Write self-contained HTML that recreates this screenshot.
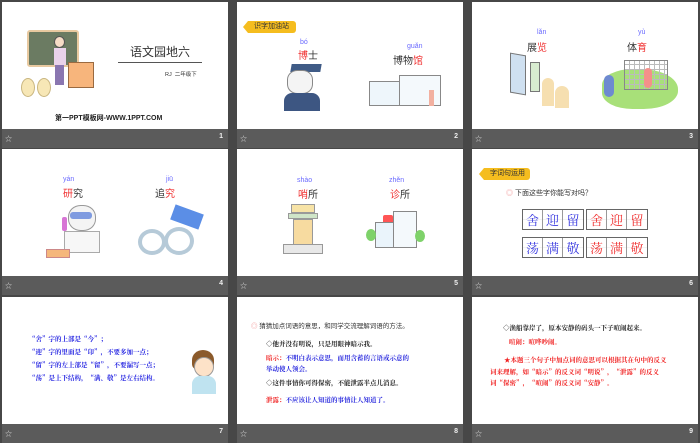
<!DOCTYPE html>
<html><head><meta charset="utf-8"><style>
*{margin:0;padding:0;box-sizing:border-box}
body{width:700px;height:438px;background:#474747;position:relative;overflow:hidden;font-family:"Liberation Sans","Noto Sans CJK SC",sans-serif}
.s{position:absolute;width:226px;height:127px;background:#fff;overflow:hidden}
.bar{position:absolute;width:226px;height:19px;background:#5b5b5b;color:#ddd;font-size:7px}
.bar .st{position:absolute;left:3px;top:5px}
.bar .n{position:absolute;right:5px;top:4px;font-weight:bold;color:#eee}
.a{position:absolute;white-space:nowrap}
.py{color:#6a6aff;font-size:7px}
.hz{font-size:10px;color:#333}
.r{color:#f03030}
.tag{position:absolute;background:#f5bd1f;color:#333;font-size:7px;height:12px;line-height:12px;padding-left:6px;border-radius:0 3px 3px 0}
.tag:before{content:"";position:absolute;left:-5px;top:0;border-right:5px solid #f5bd1f;border-top:6px solid transparent;border-bottom:6px solid transparent}
.grid{position:absolute;display:flex;border:1px solid #666;height:21px}
.grid span{width:20px;border-right:1px solid #999;text-align:center;font-size:13px;line-height:19px;font-family:"Noto Serif CJK SC",serif;background:linear-gradient(#fff 48%,#ddd 50%,#fff 52%)}
.grid span:last-child{border-right:none}
.b7{color:#1a1ae0;font-weight:bold;font-size:6.5px;font-family:"Noto Serif CJK SC",serif}
.t8{font-size:6.5px;font-weight:bold;font-family:"Noto Serif CJK SC",serif}
</style></head><body>

<!-- row 1 -->
<div class="s" style="left:2px;top:2px">
  <div class="a" style="left:25px;top:28px;width:52px;height:37px;background:#6b7b62;border:2px solid #e8c9a0;border-radius:3px"></div>
  <div class="a" style="left:52px;top:34px;width:11px;height:12px;background:#f6dcc6;border-radius:50%;border:1px solid #555"></div>
  <div class="a" style="left:52px;top:46px;width:12px;height:17px;background:#e9d2ea"></div>
  <div class="a" style="left:53px;top:63px;width:9px;height:20px;background:#8a76b0"></div>
  <div class="a" style="left:66px;top:60px;width:26px;height:26px;background:#f7b57c;border:1px solid #9a6a40"></div>
  <div class="a" style="left:19px;top:76px;width:14px;height:19px;background:#f7e7b6;border-radius:50%;border:1px solid #c9b680"></div>
  <div class="a" style="left:35px;top:76px;width:14px;height:19px;background:#f7e7b6;border-radius:50%;border:1px solid #c9b680"></div>
  <div class="a" style="left:128px;top:41px;font-size:12px;color:#333">语文园地六</div>
  <div class="a" style="left:116px;top:60px;width:84px;height:1px;background:#555"></div>
  <div class="a" style="left:163px;top:68px;font-size:5.5px;color:#333">RJ &nbsp;二年级下</div>
  <div class="a" style="left:53px;top:111px;font-size:7px;font-weight:bold;color:#222">第一PPT模板网-WWW.1PPT.COM</div>
</div>
<div class="bar" style="left:2px;top:129px"><span class="st">☆</span><span class="n">1</span></div>

<div class="s" style="left:237px;top:2px">
  <div class="tag" style="left:11px;top:19px;width:48px">识字加油站</div>
  <div class="a py" style="left:63px;top:37px">bó</div>
  <div class="a hz" style="left:61px;top:45px"><span class="r">博</span>士</div>
  <div class="a" style="left:54px;top:62px;width:30px;height:8px;background:#3f5b86;transform:skewX(-10deg)"></div>
  <div class="a" style="left:50px;top:68px;width:26px;height:24px;background:#f4f4f4;border:1px solid #888;border-radius:40%"></div>
  <div class="a" style="left:47px;top:91px;width:36px;height:18px;background:#3d5682;border-radius:8px 8px 0 0"></div>
  <div class="a py" style="left:170px;top:41px">guǎn</div>
  <div class="a hz" style="left:156px;top:50px">博物<span class="r">馆</span></div>
  <div class="a" style="left:132px;top:79px;width:44px;height:25px;border:1px solid #888;background:#eef6fb"></div>
  <div class="a" style="left:162px;top:73px;width:42px;height:31px;border:1px solid #888;background:#f4f9fc"></div>
  <div class="a" style="left:192px;top:88px;width:5px;height:16px;background:#f2b0a0"></div>
</div>
<div class="bar" style="left:237px;top:129px"><span class="st">☆</span><span class="n">2</span></div>

<div class="s" style="left:472px;top:2px">
  <div class="a py" style="left:65px;top:27px">lǎn</div>
  <div class="a hz" style="left:55px;top:37px">展<span class="r">览</span></div>
  <div class="a" style="left:38px;top:52px;width:16px;height:40px;border:1px solid #777;background:#cfe0f0;transform:skewY(10deg)"></div>
  <div class="a" style="left:58px;top:60px;width:10px;height:30px;border:1px solid #777;background:#d8ecd0"></div>
  <div class="a" style="left:70px;top:76px;width:12px;height:28px;background:#f6dfb0;border-radius:6px 6px 0 0"></div>
  <div class="a" style="left:83px;top:84px;width:14px;height:22px;background:#f6dfb0;border-radius:7px 7px 0 0"></div>
  <div class="a py" style="left:166px;top:27px">yù</div>
  <div class="a hz" style="left:155px;top:37px">体<span class="r">育</span></div>
  <div class="a" style="left:130px;top:67px;width:76px;height:40px;background:#a8e079;border-radius:40% 50% 45% 40%"></div>
  <div class="a" style="left:152px;top:58px;width:44px;height:30px;border:1px solid #888;background:repeating-linear-gradient(90deg,transparent 0 4px,#bbb 4px 5px),repeating-linear-gradient(0deg,transparent 0 4px,#bbb 4px 5px)"></div>
  <div class="a" style="left:132px;top:73px;width:10px;height:22px;background:#6e8ad0;border-radius:5px"></div>
  <div class="a" style="left:172px;top:66px;width:8px;height:20px;background:#f4908a;border-radius:4px"></div>
</div>
<div class="bar" style="left:472px;top:129px"><span class="st">☆</span><span class="n">3</span></div>

<!-- row 2 -->
<div class="s" style="left:2px;top:149px">
  <div class="a py" style="left:61px;top:27px">yán</div>
  <div class="a hz" style="left:61px;top:36px"><span class="r">研</span>究</div>
  <div class="a" style="left:66px;top:56px;width:28px;height:26px;background:#f4f4f4;border:1px solid #999;border-radius:45%"></div>
  <div class="a" style="left:68px;top:63px;width:22px;height:7px;background:#7f9be0;border-radius:3px"></div>
  <div class="a" style="left:62px;top:82px;width:36px;height:22px;background:#f7f7f7;border:1px solid #aaa"></div>
  <div class="a" style="left:44px;top:100px;width:24px;height:9px;background:#f5b77b;border:1px solid #c88"></div>
  <div class="a" style="left:60px;top:68px;width:5px;height:14px;background:#d775d5;border-radius:2px"></div>
  <div class="a py" style="left:164px;top:27px">jiū</div>
  <div class="a hz" style="left:153px;top:36px">追<span class="r">究</span></div>
  <div class="a" style="left:170px;top:60px;width:30px;height:16px;background:#5b8ee6;transform:rotate(20deg)"></div>
  <div class="a" style="left:136px;top:80px;width:28px;height:26px;border:4px solid #b6cad8;border-radius:50%"></div>
  <div class="a" style="left:162px;top:78px;width:30px;height:28px;border:4px solid #b6cad8;border-radius:50%"></div>
</div>
<div class="bar" style="left:2px;top:276px"><span class="st">☆</span><span class="n">4</span></div>

<div class="s" style="left:237px;top:149px">
  <div class="a py" style="left:60px;top:28px">shào</div>
  <div class="a hz" style="left:61px;top:37px"><span class="r">哨</span>所</div>
  <div class="a" style="left:54px;top:55px;width:24px;height:9px;background:#f7e3a6;border:1px solid #999"></div>
  <div class="a" style="left:51px;top:64px;width:30px;height:6px;background:#cfe5c8;border:1px solid #999"></div>
  <div class="a" style="left:56px;top:70px;width:20px;height:26px;background:#f7dba0;border:1px solid #999"></div>
  <div class="a" style="left:46px;top:95px;width:40px;height:10px;background:#e8e8e8;border:1px solid #999"></div>
  <div class="a py" style="left:152px;top:28px">zhěn</div>
  <div class="a hz" style="left:153px;top:37px"><span class="r">诊</span>所</div>
  <div class="a" style="left:146px;top:66px;width:10px;height:10px;background:#f55;border-radius:2px"></div>
  <div class="a" style="left:138px;top:73px;width:40px;height:26px;background:#eaf4fb;border:1px solid #888"></div>
  <div class="a" style="left:156px;top:62px;width:24px;height:37px;background:#f4f9fc;border:1px solid #888"></div>
  <div class="a" style="left:129px;top:80px;width:10px;height:12px;background:#7ed26a;border-radius:50%"></div>
  <div class="a" style="left:178px;top:81px;width:10px;height:12px;background:#7ed26a;border-radius:50%"></div>
</div>
<div class="bar" style="left:237px;top:276px"><span class="st">☆</span><span class="n">5</span></div>

<div class="s" style="left:472px;top:149px">
  <div class="tag" style="left:12px;top:19px;width:46px">字词句运用</div>
  <div class="a" style="left:34px;top:39px;font-size:7px;color:#333"><span style="color:#f09090">◎</span> 下面这些字你能写对吗？</div>
  <div class="grid" style="left:50px;top:60px;color:#3a3ae0"><span>舍</span><span>迎</span><span>留</span></div>
  <div class="grid" style="left:114px;top:60px;color:#f03030"><span>舍</span><span>迎</span><span>留</span></div>
  <div class="grid" style="left:50px;top:88px;color:#3a3ae0"><span>荡</span><span>满</span><span>敬</span></div>
  <div class="grid" style="left:114px;top:88px;color:#f03030"><span>荡</span><span>满</span><span>敬</span></div>
</div>
<div class="bar" style="left:472px;top:276px"><span class="st">☆</span><span class="n">6</span></div>

<!-- row 3 -->
<div class="s" style="left:2px;top:297px">
  <div class="a b7" style="left:27px;top:37px">“舍”字的上部是“今”；</div>
  <div class="a b7" style="left:27px;top:50px">“迎”字的里面是“卬”，不要多加一点；</div>
  <div class="a b7" style="left:27px;top:63px">“留”字的左上部是“留”，不要漏写一点；</div>
  <div class="a b7" style="left:27px;top:76px">“荡”是上下结构，“满、敬”是左右结构。</div>
  <div class="a" style="left:190px;top:53px;width:22px;height:20px;background:#8b5a2b;border-radius:50% 50% 30% 30%"></div>
  <div class="a" style="left:192px;top:60px;width:20px;height:20px;background:#fde2c8;border-radius:50%;border:1px solid #999"></div>
  <div class="a" style="left:190px;top:79px;width:24px;height:18px;background:#bfe3f0;border-radius:8px 8px 0 0"></div>
</div>
<div class="bar" style="left:2px;top:424px"><span class="st">☆</span><span class="n">7</span></div>

<div class="s" style="left:237px;top:297px">
  <div class="a" style="left:14px;top:23px;font-size:6.5px;color:#333"><span style="color:#f09090">◎</span> 猜猜加点词语的意思，和同学交流理解词语的方法。</div>
  <div class="a t8" style="left:29px;top:42px;color:#222">◇他并没有明说，只是用眼神暗示我。</div>
  <div class="a t8" style="left:29px;top:56px;color:#2222dd"><span style="color:#f02020">暗示：</span>不明白表示意思，而用含蓄的言语或示意的</div>
  <div class="a t8" style="left:29px;top:67px;color:#2222dd">举动使人领会。</div>
  <div class="a t8" style="left:29px;top:81px;color:#222">◇这件事情你可得保密，不能泄露半点儿消息。</div>
  <div class="a t8" style="left:29px;top:98px;color:#2222dd"><span style="color:#f02020">泄露：</span>不应该让人知道的事情让人知道了。</div>
</div>
<div class="bar" style="left:237px;top:424px"><span class="st">☆</span><span class="n">8</span></div>

<div class="s" style="left:472px;top:297px">
  <div class="a t8" style="left:31px;top:26px;color:#222">◇渔船靠岸了，原本安静的码头一下子喧闹起来。</div>
  <div class="a t8" style="left:37px;top:40px;color:#f02020">喧闹：喧哗吵闹。</div>
  <div class="a t8" style="left:18px;top:57px;color:#f02020;white-space:normal;width:180px;line-height:11.7px;text-indent:14px">★本题三个句子中加点词的意思可以根据其在句中的反义词来理解，如“暗示”的反义词“明说”，“泄露”的反义词“保密”，“喧闹”的反义词“安静”。</div>
</div>
<div class="bar" style="left:472px;top:424px"><span class="st">☆</span><span class="n">9</span></div>

</body></html>
